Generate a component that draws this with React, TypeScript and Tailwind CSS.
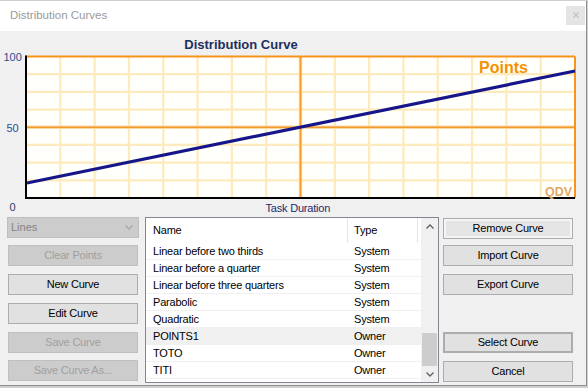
const rows: [string, string][] = [
  ["Linear before two thirds", "System"],
  ["Linear before a quarter", "System"],
  ["Linear before three quarters", "System"],
  ["Parabolic", "System"],
  ["Quadratic", "System"],
  ["POINTS1", "Owner"],
  ["TOTO", "Owner"],
  ["TITI", "Owner"],
];

// plot area in chart coordinates (chart starts at page y = 31)
const X0 = 26;
const X1 = 575;
const Y0 = 25.5;
const Y1 = 167;
const colW = (X1 - X0) / 16;
const rowH = (Y1 - Y0) / 8;

function Chart() {
  const vLines = Array.from({ length: 15 }, (_, i) => X0 + (i + 1) * colW);
  const hLines = Array.from({ length: 7 }, (_, i) => Y0 + (i + 1) * rowH);
  return (
    <svg width="586" height="184" className="block shrink-0 font-['Liberation_Sans',Arial,sans-serif]">
      <text x="241" y="18" textAnchor="middle" fontSize="13" fontWeight="bold" fill="#1f2f5e">
        Distribution Curve
      </text>

      <rect x={X0} y={Y0} width={X1 - X0} height={Y1 - Y0} fill="#fffffb" />
      {vLines.map((x, i) =>
        i === 7 ? null : (
          <line key={"v" + i} x1={x} y1={Y0} x2={x} y2={Y1} stroke="#fdebbd" strokeWidth="2.2" />
        )
      )}
      {hLines.map((y, i) =>
        i === 3 ? null : (
          <line key={"h" + i} x1={X0} y1={y} x2={X1} y2={y} stroke="#fdebbd" strokeWidth="2.2" />
        )
      )}
      <line x1={X0 + 8 * colW} y1={Y0} x2={X0 + 8 * colW} y2={Y1} stroke="#fbd9a0" strokeWidth="3.5" />
      <line x1={X0} y1={Y0 + 4 * rowH} x2={X1} y2={Y0 + 4 * rowH} stroke="#fbd9a0" strokeWidth="3.5" />
      <line x1={X0 + 8 * colW} y1={Y0} x2={X0 + 8 * colW} y2={Y1} stroke="#f29a2e" strokeWidth="1.6" />
      <line x1={X0} y1={Y0 + 4 * rowH} x2={X1} y2={Y0 + 4 * rowH} stroke="#f29a2e" strokeWidth="1.6" />

      {/* frame */}
      <line x1={X0} y1={Y0} x2={X1} y2={Y0} stroke="#f7941d" strokeWidth="2" />
      <line x1={X1} y1={Y0} x2={X1} y2={Y1} stroke="#f7941d" strokeWidth="2" />
      <line x1={X0} y1={Y0 - 1} x2={X0} y2={Y1 + 1} stroke="#000" strokeWidth="2" />
      <line x1={X0 - 1} y1={Y1} x2={X1} y2={Y1} stroke="#000" strokeWidth="2" />

      <line x1={X0 + 1} y1="152" x2={X1} y2="40" stroke="#16168a" strokeWidth="3.2" />

      <text x="479" y="42.3" fontSize="16" fontWeight="bold" fill="#f39200">
        Points
      </text>
      <text x="545" y="165" fontSize="12.5" fontWeight="bold" fill="#e3a866">
        QDV
      </text>

      <text x="3.5" y="29.7" fontSize="11" fill="#2c4d93">100</text>
      <text x="6.5" y="100.7" fontSize="11" fill="#2c4d93">50</text>
      <text x="9.5" y="179.7" fontSize="11" fill="#2f3a66">0</text>
      <text x="265.5" y="180.5" fontSize="11" fill="#1f2a6e" letterSpacing="-0.2">
        Task Duration
      </text>
    </svg>
  );
}

function Button({ label, disabled, className = "" }: { label: string; disabled?: boolean; className?: string }) {
  return (
    <div
      className={
        "h-[21px] w-[130px] flex items-center justify-center border text-[11px] tracking-[-0.2px] " +
        (disabled ? "bg-[#cccccc] border-[#bfbfbf] text-[#a0a0a0] " : "bg-[#e1e1e1] border-[#adadad] text-black ") +
        className
      }
    >
      {label}
    </div>
  );
}

function Chevron({ up, color = "#606060" }: { up?: boolean; color?: string }) {
  return (
    <svg width="8" height="5" viewBox="0 0 8 5">
      <polyline
        points={up ? "0.5,4.5 4,1 7.5,4.5" : "0.5,0.5 4,4 7.5,0.5"}
        fill="none"
        stroke={color}
        strokeWidth="1.3"
      />
    </svg>
  );
}

export default function App() {
  return (
    <div className="w-[588px] h-[388px] bg-[#cfcfcf] pt-px font-['Liberation_Sans',Arial,sans-serif] overflow-hidden">
      <div className="w-[587px] h-[385px] bg-[#f0f0f0] border-r border-b border-[#8f8f8f] flex flex-col">
        {/* title bar */}
        <div className="h-[30px] bg-white flex items-center justify-between pl-[10px] pr-px shrink-0">
          <span className="text-[11.5px] text-[#9a9a9a] -mt-[1px]">Distribution Curves</span>
          <div className="w-[19px] h-[19px] bg-[#e5e5e5] flex items-center justify-center mb-[2px]">
            <svg width="6" height="6" viewBox="0 0 6 6">
              <path d="M0.5 0.5 L5.5 5.5 M5.5 0.5 L0.5 5.5" stroke="#c2c2c2" strokeWidth="1.2" />
            </svg>
          </div>
        </div>

        <Chart />

        {/* controls */}
        <div className="flex pl-[7px] pt-[2px]">
          <div className="w-[132px] flex flex-col">
            <div className="h-[21px] w-[132px] bg-[#cccccc] border border-[#bfbfbf] flex items-center justify-between pl-[3px] pr-[5px] text-[11px] text-[#838383]">
              <span>Lines</span>
              <Chevron color="#a6a6a6" />
            </div>
            <Button label="Clear Points" disabled className="mt-[7px] ml-px" />
            <Button label="New Curve" className="mt-[8px] ml-px" />
            <Button label="Edit Curve" className="mt-[8px] ml-px" />
            <Button label="Save Curve" disabled className="mt-[8px] ml-px" />
            <Button label="Save Curve As..." disabled className="mt-[7px] ml-px" />
          </div>

          {/* curve list */}
          <div className="ml-[6px] w-[294px] h-[166px] border border-[#828790] bg-white flex text-[11px] tracking-[-0.2px] text-black">
            <div className="flex-1 flex flex-col overflow-hidden">
              <div className="h-[25px] flex shrink-0">
                <div className="w-[202px] border-r border-[#e5e5e5] pl-[7px] flex items-center">Name</div>
                <div className="w-[70px] border-r border-[#e5e5e5] pl-[6px] flex items-center">Type</div>
              </div>
              {rows.map(([name, type]) => (
                <div
                  key={name}
                  className={
                    "h-[17px] flex shrink-0 border-b border-[#f0f0f0] " + (name === "POINTS1" ? "bg-[#f0f0f0]" : "")
                  }
                >
                  <div className="w-[202px] pl-[7px] flex items-center">{name}</div>
                  <div className="w-[70px] pl-[6px] flex items-center">{type}</div>
                </div>
              ))}
            </div>
            <div className="w-[17px] bg-[#f0f0f0] flex flex-col">
              <div className="h-[17px] flex items-center justify-center shrink-0">
                <Chevron up />
              </div>
              <div className="flex-1" />
              <div className="h-[33px] mx-px bg-[#cdcdcd] shrink-0" />
              <div className="h-[16px] flex items-center justify-center shrink-0">
                <Chevron />
              </div>
            </div>
          </div>

          <div className="ml-[4px] w-[130px] flex flex-col">
            <Button label="Remove Curve" className="mt-px bg-[#e5e5e5] shadow-[inset_0_0_0_2px_#f4f4f4]" />
            <Button label="Import Curve" className="mt-[6px]" />
            <Button label="Export Curve" className="mt-[8px]" />
            <Button label="Select Curve" className="mt-[37px] border-2 border-[#0078d7]" />
            <Button label="Cancel" className="mt-[8px]" />
          </div>
        </div>
      </div>
    </div>
  );
}
